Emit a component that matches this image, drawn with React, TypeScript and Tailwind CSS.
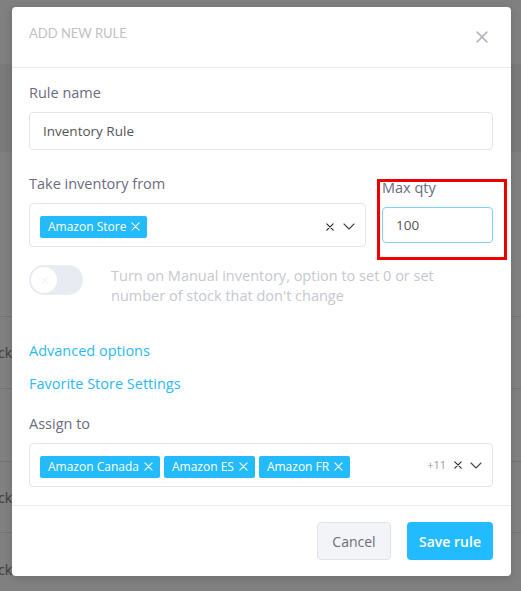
import React from "react";

const XIcon = ({ className = "", stroke = "currentColor", sw = 1.3 }: { className?: string; stroke?: string; sw?: number }) => (
  <svg viewBox="0 0 10 10" className={className} fill="none" stroke={stroke} strokeWidth={sw} strokeLinecap="round">
    <path d="M1 1L9 9M9 1L1 9" />
  </svg>
);

const Chevron = ({ className = "" }: { className?: string }) => (
  <svg viewBox="0 0 12 7" className={className} fill="none" stroke="currentColor" strokeWidth={1.1} strokeLinecap="round" strokeLinejoin="round">
    <path d="M1 1L6 6L11 1" />
  </svg>
);

const Tag = ({ label }: { label: string }) => (
  <span className="flex h-[22px] items-center gap-[5px] rounded-[2px] bg-[#24bbfb] pl-[8px] pr-[7px] text-[12px] text-white">
    {label}
    <XIcon className="h-[9px] w-[9px]" sw={1.2} />
  </span>
);

const BgRow = ({ h, text }: { h: string; text?: boolean }) => (
  <div className={`${h} flex items-center border-b border-[#737373] text-[14px] text-[#3b3b3b]`}>
    {text && <span className="-ml-[2px]">ck</span>}
  </div>
);

export default function App() {
  return (
    <div className="relative h-[591px] w-[521px] overflow-hidden bg-[#808080] font-['Open_Sans',sans-serif]">
      {/* background page (dimmed) */}
      <div className="flex flex-col">
        <div className="h-[64px]" />
        <div className="h-[88px] bg-[#7a7a7a]" />
        <div className="h-[165px] border-b border-[#737373]" />
        <BgRow h="h-[72px]" text />
        <BgRow h="h-[73px]" />
        <BgRow h="h-[71px]" text />
        <div className="flex h-[72px] items-center text-[14px] text-[#3b3b3b]">
          <span className="-ml-[2px]">ck</span>
        </div>
      </div>

      {/* modal */}
      <div className="absolute left-[12px] top-[7px] w-[499px] rounded-[4px] bg-white shadow-[0_2px_8px_rgba(0,0,0,0.15)]">
        <div className="flex h-[61px] items-center justify-between border-b border-[#ebebef] pl-[17px] pr-[23px]">
          <span className="-mt-[6px] font-['Lato',sans-serif] text-[13px] text-[#c2c2c2]">ADD NEW RULE</span>
          <XIcon className="h-[12px] w-[12px] text-[#b4b6bf]" sw={1.4} />
        </div>

        <div className="pb-[18px] pl-[17px] pr-[18px] pt-[14px]">
          <div className="text-[14.5px] leading-[22px] text-[#6b6c80]">Rule name</div>
          <div className="mt-[8px] flex h-[38px] items-center rounded-[4px] border border-[#e4e5ea] px-[13px] text-[13.5px] text-[#555]">
            Inventory Rule
          </div>

          <div className="mt-[23px] flex gap-[16px]">
            <div className="flex-1">
              <div className="text-[14.5px] leading-[22px] text-[#6b6c80]">Take inventory from</div>
              <div className="mt-[8px] flex h-[44px] items-center rounded-[4px] border border-[#e4e5ea] pl-[10px] pr-[10px] pt-[3px]">
                <Tag label="Amazon Store" />
                <div className="ml-auto flex items-center gap-[9px] text-[#222]">
                  <XIcon className="h-[8px] w-[8px]" sw={1.3} />
                  <Chevron className="h-[7px] w-[12px] text-[#444]" />
                </div>
              </div>
            </div>
            <div className="relative w-[111px] pt-[4px]">
              <div className="pointer-events-none absolute -left-[5px] -right-[14px] top-[6px] bottom-[-13px] border-[3px] border-[#ee0000]" />
              <div className="text-[14.5px] leading-[22px] text-[#6b6c80]">Max qty</div>
              <div className="mt-[8px] flex h-[36px] items-center rounded-[4px] border border-[#7fd0f5] px-[13px] text-[13.5px] text-[#555]">
                100
              </div>
            </div>
          </div>

          <div className="mt-[18px] flex items-start gap-[28px]">
            <div className="flex h-[30px] w-[54px] shrink-0 items-center rounded-full bg-[#e8ebf1] px-[2px]">
              <div className="flex h-[26px] w-[26px] items-center justify-center rounded-full bg-white">
                <XIcon className="h-[7px] w-[7px] text-[#e6e8ee]" sw={1.2} />
              </div>
            </div>
            <div className="mt-[1px] text-[14.5px] leading-[20px] text-[#c6c8d1]">
              Turn on Manual inventory, option to set 0 or set
              <br />
              number of stock that don't change
            </div>
          </div>

          <div className="mt-[34px] text-[14.5px] leading-[22px] text-[#2cb9f5]">Advanced options</div>
          <div className="mt-[11px] text-[14.5px] leading-[22px] text-[#2cb9f5]">Favorite Store Settings</div>

          <div className="mt-[18px] text-[14.5px] leading-[22px] text-[#6b6c80]">Assign to</div>
          <div className="mt-[8px] flex h-[44px] items-center rounded-[4px] border border-[#e4e5ea] pl-[10px] pr-[10px]">
            <div className="flex items-center gap-[4px] pt-[3px]">
              <Tag label="Amazon Canada" />
              <Tag label="Amazon ES" />
              <Tag label="Amazon FR" />
            </div>
            <div className="ml-auto flex items-center gap-[8px] text-[#222]">
              <span className="text-[11px] text-[#999]">+11</span>
              <XIcon className="h-[8px] w-[8px]" sw={1.3} />
              <Chevron className="h-[7px] w-[12px] text-[#444]" />
            </div>
          </div>
        </div>

        <div className="flex justify-end gap-[16px] border-t border-[#ebebef] pb-[16px] pl-[17px] pr-[18px] pt-[16px]">
          <button className="h-[38px] w-[74px] rounded-[4px] border border-[#e2e3ea] bg-[#f3f4f8] text-[14px] text-[#6b6c78]">
            Cancel
          </button>
          <button className="h-[38px] w-[86px] rounded-[4px] bg-[#22bbff] text-[14px] font-semibold text-white">
            Save rule
          </button>
        </div>
      </div>
    </div>
  );
}
